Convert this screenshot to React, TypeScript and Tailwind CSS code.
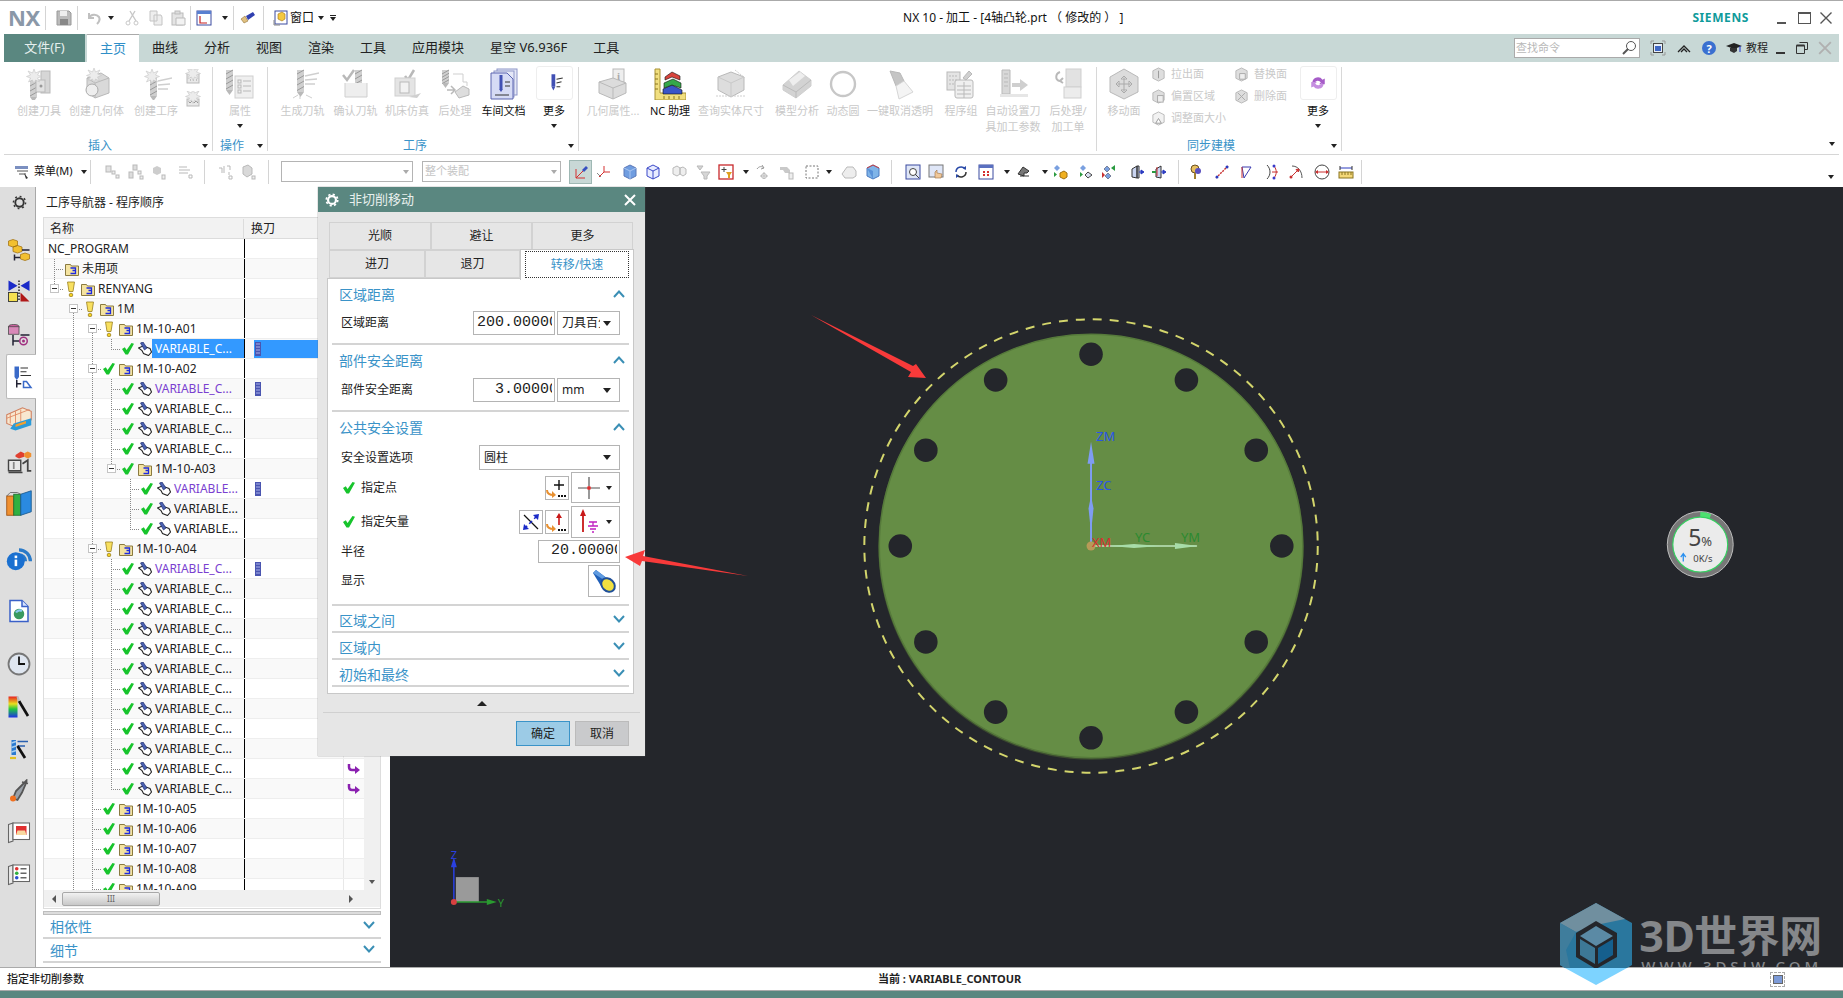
import type { ReactNode } from "react";

const GH = "#cfcfcf";
const GD = "#b9b9b9";

function Ico({ className = "h-4 w-4", box = 16, children }: { className?: string; box?: number; children: ReactNode }) {
  return (
    <svg viewBox={`0 0 ${box} ${box}`} className={`shrink-0 ${className}`}>
      {children}
    </svg>
  );
}

function Tri({ className = "" }: { className?: string }) {
  return <span className={`inline-block h-0 w-0 border-x-[3.5px] border-t-[4px] border-x-transparent border-t-[#222] ${className}`} />;
}

function Mill({ x, y, h = 20, c = GH }: { x: number; y: number; h?: number; c?: string }) {
  return (
    <g>
      <rect x={x} y={y} width="7" height={h} fill={c} />
      {[0, 1, 2, 3].map((i) => (
        <path key={i} d={`M${x} ${y + 4 + (i * h) / 4}l7-4`} stroke="#9a9a9a" strokeWidth="1" />
      ))}
      <path d={`M${x} ${y + h}l3.5 5 3.5-5z`} fill={GD} />
    </g>
  );
}

function Star({ x, y }: { x: number; y: number }) {
  return <path d={`M${x} ${y - 6}l1.5 4 4.5-2-2.5 4 4 1.5-4 1.5 2 4-4-2-1.5 3.5-1.5-3.5-4 2 2-4-4-1.5 4-1.5-2.5-4 4.5 2z`} fill="#ececec" stroke="#c6c6c6" strokeWidth=".6" />;
}

function Lines({ x, y }: { x: number; y: number }) {
  return <path d={`M${x} ${y}l14-3M${x} ${y + 4}l12-1M${x} ${y + 8}l10 0`} stroke={GH} strokeWidth="1.4" fill="none" />;
}

const Large = {
  createTool: (
    <>
      <Mill x={7} y={9} />
      <rect x="18" y="3" width="9" height="22" fill="#d6d6d6" stroke={GD} />
      <rect x="13" y="12" width="9" height="12" fill="#e2e2e2" stroke={GD} />
      <circle cx="18" cy="18" r="1.5" fill="#999" />
      <Star x={11} y={7} />
    </>
  ),
  createGeom: (
    <>
      <path d="M6 10l14-5 8 5v15l-14 5-8-6z" fill="#d9d9d9" stroke={GD} />
      <path d="M14 15l14-5M14 15v15M14 15l-8-5" stroke={GD} fill="none" />
      <circle cx="11" cy="22" r="6" fill="#eee" stroke="#aaa" />
      <Star x={13} y={6} />
    </>
  ),
  createOp: (
    <>
      <Mill x={10} y={8} />
      <Lines x={18} y={13} />
      <Star x={12} y={7} />
    </>
  ),
  attrs: (
    <>
      <Mill x={2} y={2} h={20} />
      <rect x="11" y="8" width="18" height="22" fill="#efefef" stroke={GH} />
      <path d="M19 13h8M19 18h8M19 23h8" stroke={GD} />
      <rect x="14" y="12" width="3" height="3" fill="none" stroke={GD} />
      <rect x="14" y="17" width="3" height="3" fill="none" stroke={GD} />
      <rect x="14" y="22" width="3" height="3" fill="none" stroke={GD} />
    </>
  ),
  gen: (
    <>
      <Mill x={10} y={2} h={22} />
      <Lines x={18} y={8} />
      <path d="M6 30l5-3M25 30l-6-3M13 31v-3" stroke={GH} />
    </>
  ),
  verify: (
    <>
      <path d="M3 7l4 5 7-10" stroke={GD} strokeWidth="2.5" fill="none" />
      <Mill x={15} y={2} h={20} />
      <path d="M5 15v14h22V15" fill="#eee" stroke={GH} />
    </>
  ),
  machine: (
    <>
      <path d="M14 8l3 4 6-10" stroke={GD} strokeWidth="2.5" fill="none" />
      <rect x="4" y="10" width="20" height="18" fill="#e4e4e4" stroke={GH} />
      <rect x="9" y="14" width="9" height="11" fill="#f2f2f2" stroke={GD} />
      <path d="M18 29l12-4-4 5z" fill={GH} />
    </>
  ),
  post: (
    <>
      <Mill x={3} y={2} h={13} />
      <path d="M8 22h8M12 18l4 4-4 4" stroke={GD} strokeWidth="1.5" fill="none" />
      <path d="M14 6h10v8h4v4" stroke={GH} fill="none" />
      <path d="M16 24l8-6 6 3v6l-10 3z" fill="#ddd" stroke={GD} />
    </>
  ),
  doc: (
    <>
      <rect x="9" y="1" width="20" height="26" fill="#e5e8f7" stroke="#8e96c8" />
      <rect x="6" y="3" width="20" height="26" fill="#e5e8f7" stroke="#8e96c8" />
      <path d="M3 5h16l6 6v20H3z" fill="#d6dbf5" stroke="#5a64b0" />
      <path d="M13 7v14" stroke="#4150b4" strokeWidth="3" />
      <path d="M11 21l2 3 2-3z" fill="#4150b4" />
      <path d="M7 27h14M17 14h5M17 18h5" stroke="#333" strokeWidth="1" />
    </>
  ),
  geoAttr: (
    <>
      <rect x="16" y="1" width="11" height="13" fill="#eee" stroke={GD} />
      <text x="21.5" y="12" fontSize="11" textAnchor="middle" fontWeight="700" fill="#aaa" fontFamily="Liberation Serif">i</text>
      <path d="M2 14l14-4 13 5v10l-13 6-14-6z" fill="#dcdcdc" stroke={GD} />
      <path d="M16 31V20M2 14l14 6 13-5" stroke={GD} fill="none" />
    </>
  ),
  nc: (
    <>
      <path d="M1 1h5v24h26v7H1z" fill="#f1df7f" stroke="#a89235" />
      <path d="M1 6h3M1 11h3M1 16h3M1 21h3M10 31v-3M15 31v-3M20 31v-3M25 31v-3" stroke="#8a7420" />
      <path d="M9 21l9-4 10 5v4H9z" fill="#3a55c8" stroke="#111" strokeWidth=".6" />
      <path d="M10 15l9-4 8 4v5l-9-3-8 3z" fill="#35a84a" stroke="#111" strokeWidth=".6" />
      <path d="M11 9l7-5 8 4v4l-8-3-7 3z" fill="#d8443c" stroke="#111" strokeWidth=".6" />
    </>
  ),
  measure: (
    <>
      <path d="M3 9l13-5 13 5v13l-13 7-13-7z" fill="#dddddd" stroke={GD} />
      <path d="M3 9l13 6 13-6M16 15v14" stroke="#c9c9c9" fill="none" />
      <path d="M1 28h30M20 2l10 8" stroke={GH} strokeDasharray="2 1" />
    </>
  ),
  wedge: (
    <>
      <path d="M2 17L18 3l12 9v6L15 30 2 22z" fill="#d3d3d3" stroke={GH} />
      <path d="M2 17l13 7v6M15 24l15-12" stroke="#bbb" fill="none" />
      <path d="M8 12l11-8 5 4-12 10z" fill="#eee" />
    </>
  ),
  ring: <circle cx="16" cy="16" r="12" fill="none" stroke="#c7c7c7" strokeWidth="2.4" />,
  lamp: (
    <>
      <path d="M6 3l10 2 4 8-8 5z" fill="#c5c5c5" stroke={GD} />
      <path d="M12 18l8-5 9 11-14 7z" fill="#f4f4f4" stroke="#d6d6d6" />
    </>
  ),
  group: (
    <>
      <rect x="2" y="4" width="13" height="18" fill="#e4e4e4" stroke={GD} />
      <path d="M4 8h9M4 12h9M4 16h9" stroke={GD} strokeDasharray="2 1" />
      <rect x="10" y="12" width="18" height="18" rx="2" fill="#efefef" stroke={GD} />
      <path d="M12 18h14M12 22h14M12 26h14M19 14v16" stroke={GD} />
      <path d="M18 10l6-7 3 3-6 6z" fill="#d0d0d0" stroke={GD} />
    </>
  ),
  auto: (
    <>
      <path d="M5 2h8v24h-8z" fill="#d8d8d8" stroke={GD} />
      <path d="M7 6h4M7 10h4M7 14h4M7 18h4" stroke={GD} />
      <path d="M3 26h28v3H3z" fill="#e6e6e6" />
      <path d="M15 15h8v-4l8 6-8 6v-4h-8z" fill="#cfcfcf" />
    </>
  ),
  postSheet: (
    <>
      <rect x="14" y="1" width="15" height="18" fill="#e2e2e2" stroke={GH} />
      <rect x="12" y="19" width="17" height="11" fill="#ececec" stroke={GH} />
      <path d="M8 4C3 6 3 12 8 13M8 13l3-3M8 13l3 2" stroke={GD} strokeWidth="2" fill="none" />
    </>
  ),
  moveFace: (
    <>
      <path d="M16 1l14 8v15l-14 7-14-7V9z" fill="#dcdcdc" stroke={GD} />
      <path d="M16 8v17M8 16h16M16 8l-3 3h6zM16 25l-3-3h6zM8 16l3-3v6zM24 16l-3-3v6z" stroke="#aaa" fill="#f4f4f4" />
    </>
  ),
};

function RibbonItem({ w, icon, label, active, drop }: { w: string; icon: ReactNode; label: ReactNode; active?: boolean; drop?: boolean }) {
  return (
    <div className={`flex shrink-0 flex-col items-center ${w}`}>
      <Ico className="mt-[1px] h-8 w-8" box={32}>
        {icon}
      </Ico>
      <div className={`mt-[3px] text-center text-[11px] leading-[16px] whitespace-nowrap ${active ? "text-[#111]" : "text-[#c9c9c9]"}`}>{label}</div>
      {drop && <Tri className="mt-[5px]" />}
    </div>
  );
}

function MoreItem({ w, children }: { w: string; children: ReactNode }) {
  return (
    <div className={`flex shrink-0 flex-col items-center ${w}`}>
      <div className="-mt-px flex h-[34px] w-[37px] items-center justify-center rounded-[3px] border border-[#eeeeee]">{children}</div>
      <div className="mt-[3px] text-[11px] leading-[16px] text-[#111]">更多</div>
      <Tri className="mt-[5px]" />
    </div>
  );
}

function RibbonGroup({ w, label, labelPad, children }: { w: string; label?: string; labelPad?: string; children: ReactNode }) {
  return (
    <div className={`relative mt-[5px] flex h-[84px] shrink-0 border-r border-[#d8d8d8] ${w}`}>
      {children}
      {label && (
        <div className="absolute right-[4px] bottom-[-5px] left-0 flex h-[20px] items-center">
          <span className={`text-center text-[12px] text-[#3a93c8] ${labelPad}`}>{label}</span>
          <Tri className="ml-auto" />
        </div>
      )}
    </div>
  );
}

function SmallFace({ label, kind }: { label: string; kind: number }) {
  return (
    <div className="flex h-[22px] items-center">
      <Ico className="h-[15px] w-[15px]">
        <path d="M8 1l6 3v8l-6 3-6-3V4z" fill={kind === 2 ? "#f2f2f2" : "#dedede"} stroke={GD} />
        {kind === 0 && <path d="M8 4v8" stroke="#999" />}
        {kind === 1 && <rect x="7" y="7" width="6" height="7" fill="#eee" stroke="#aaa" />}
        {kind === 2 && <path d="M5 13l3-5 3 5z" fill="#fff" stroke="#999" />}
        {kind === 3 && <path d="M6 7h6v6H6z" fill="#eee" stroke="#aaa" />}
        {kind === 4 && <path d="M4 12l8-8M4 4l8 8" stroke="#aaa" />}
      </Ico>
      <span className="ml-[5px] text-[11px] whitespace-nowrap text-[#c9c9c9]">{label}</span>
    </div>
  );
}

function Ribbon() {
  return (
    <div className="mx-[4px] flex h-[93px] shrink-0 border-b border-[#d6d6d6] bg-white">
      <RibbonGroup w="w-[209px]" label="插入" labelPad="w-[192px]">
        <div className="flex pl-[8px]">
          <RibbonItem w="w-[54px]" icon={Large.createTool} label="创建刀具" />
          <RibbonItem w="w-[61px]" icon={Large.createGeom} label="创建几何体" />
          <RibbonItem w="w-[58px]" icon={Large.createOp} label="创建工序" />
          <div className="flex w-[18px] flex-col gap-[6px] pt-[2px]">
            <Ico>
              <rect x="2" y="5" width="12" height="9" fill="#e8e8e8" stroke={GD} />
              <path d="M5 8h1M8 8h1M11 8h1M5 11h1M8 11h1M11 11h1" stroke="#999" />
              <Star x={8} y={3} />
            </Ico>
            <Ico>
              <rect x="2" y="8" width="12" height="7" fill="#e8e8e8" stroke={GD} />
              <path d="M3 10l2 2 2-2 2 2 2-2 2 2" stroke="#999" fill="none" />
              <Star x={8} y={4} />
            </Ico>
          </div>
        </div>
      </RibbonGroup>
      <RibbonGroup w="w-[55px]" label="操作" labelPad="w-[38px]">
        <RibbonItem w="w-[54px]" icon={Large.attrs} label="属性" drop />
      </RibbonGroup>
      <RibbonGroup w="w-[311px]" label="工序" labelPad="w-[294px]">
        <div className="flex pl-[8px]">
          <RibbonItem w="w-[53px]" icon={Large.gen} label="生成刀轨" />
          <RibbonItem w="w-[53px]" icon={Large.verify} label="确认刀轨" />
          <RibbonItem w="w-[50px]" icon={Large.machine} label="机床仿真" />
          <RibbonItem w="w-[46px]" icon={Large.post} label="后处理" />
          <RibbonItem w="w-[51px]" icon={Large.doc} label="车间文档" active />
          <MoreItem w="w-[50px]">
            <Ico className="h-5 w-5">
              <path d="M6 1h3v10H6z" fill="#4150b4" />
              <path d="M6 11l1.5 3 1.5-3z" fill="#4150b4" />
              <path d="M10 5l5-1M10 8l4-1M10 11h3" stroke="#333" strokeWidth=".9" />
            </Ico>
          </MoreItem>
        </div>
      </RibbonGroup>
      <RibbonGroup w="w-[518px]">
        <div className="flex pl-[6px]">
          <RibbonItem w="w-[56px]" icon={Large.geoAttr} label="几何属性..." />
          <RibbonItem w="w-[58px]" icon={Large.nc} label="NC 助理" active />
          <RibbonItem w="w-[64px]" icon={Large.measure} label="查询实体尺寸" />
          <RibbonItem w="w-[68px]" icon={Large.wedge} label="模型分析" />
          <RibbonItem w="w-[24px]" icon={Large.ring} label="动态圆" />
          <RibbonItem w="w-[90px]" icon={Large.lamp} label="一键取消透明" />
          <RibbonItem w="w-[32px]" icon={Large.group} label="程序组" />
          <RibbonItem w="w-[72px]" icon={Large.auto} label={<>自动设置刀<br />具加工参数</>} />
          <RibbonItem w="w-[38px]" icon={Large.postSheet} label={<>后处理/<br />加工单</>} />
        </div>
      </RibbonGroup>
      <RibbonGroup w="w-[245px]" label="同步建模" labelPad="w-[228px]">
        <RibbonItem w="w-[54px]" icon={Large.moveFace} label="移动面" />
        <div className="-mt-[4px] flex w-[83px] flex-col">
          <SmallFace label="拉出面" kind={0} />
          <SmallFace label="偏置区域" kind={1} />
          <SmallFace label="调整面大小" kind={2} />
        </div>
        <div className="-mt-[4px] flex w-[65px] flex-col">
          <SmallFace label="替换面" kind={3} />
          <SmallFace label="删除面" kind={4} />
        </div>
        <MoreItem w="w-[38px]">
          <Ico className="h-[18px] w-[18px]">
            <path d="M3 7a5 5 0 0 1 9-2l2-1v5h-5l1.5-1.5A3 3 0 0 0 5 8z" fill="#a65cc8" />
            <path d="M13 9a5 5 0 0 1-9 2l-2 1V7h5L5.5 8.5A3 3 0 0 0 11 8z" fill="#c58ee0" />
          </Ico>
        </MoreItem>
      </RibbonGroup>
      <div className="flex flex-1 items-end justify-end pr-[4px] pb-[8px]">
        <Tri />
      </div>
    </div>
  );
}

function Sl({ w, children }: { w: string; children?: ReactNode }) {
  return <div className={`flex shrink-0 items-center ${w}`}>{children}</div>;
}

function VSep({ className = "" }: { className?: string }) {
  return <div className={`h-[24px] w-px shrink-0 bg-[#d4d4d4] ${className}`} />;
}

const Ghost = ({ v = 0 }: { v?: number }) => (
  <Ico>
    {v === 0 && (
      <>
        <rect x="1" y="2" width="5" height="6" fill="#e2e2e2" stroke={GD} />
        <rect x="7" y="7" width="3" height="3" fill="#eee" stroke={GD} />
        <rect x="11" y="11" width="3" height="3" fill="#eee" stroke={GD} />
      </>
    )}
    {v === 1 && (
      <>
        <rect x="5" y="1" width="4" height="5" fill="#ddd" stroke={GD} />
        <rect x="1" y="8" width="4" height="6" fill="#ddd" stroke={GD} />
        <rect x="10" y="7" width="3" height="3" fill="#eee" stroke={GD} />
        <rect x="12" y="12" width="3" height="3" fill="#eee" stroke={GD} />
      </>
    )}
    {v === 2 && (
      <>
        <path d="M2 4l4-2 4 2v5l-4 2-4-2z" fill="#cdcdcd" />
        <rect x="11" y="11" width="3" height="4" fill="#eee" stroke={GD} />
      </>
    )}
    {v === 3 && <path d="M2 3h8M2 6h11M2 9h9M12 11h3v3h-3z" stroke={GD} fill="none" />}
    {v === 4 && <path d="M1 4h3v5M6 2v7M9 2h3v4M11 8v3M11 12h3v3h-3z" stroke={GD} fill="none" />}
    {v === 5 && (
      <>
        <path d="M3 3l5-2 4 3v6l-5 3-4-3z" fill="#d9d9d9" stroke={GD} />
        <rect x="12" y="12" width="3" height="3" fill="#eee" stroke={GD} />
      </>
    )}
    {v === 6 && <path d="M2 4l4-2 3 2v6l-3 2-4-2zM9 4l3-1 3 2v5l-3 2-3-2z" fill="#eee" stroke={GD} />}
    {v === 7 && <path d="M1 2h6l-3 4zM5 8h9l-3 4v3h-3v-3z" fill="#d6d6d6" stroke={GD} />}
    {v === 8 && (
      <>
        <path d="M3 5C5 2 8 2 10 4M8 1l2 3-3 1" stroke="#999" fill="none" />
        <path d="M10 8v7M6 12h8" stroke={GD} />
        <circle cx="10" cy="12" r="2.5" fill="none" stroke={GD} />
      </>
    )}
    {v === 9 && (
      <>
        <path d="M1 3h7l3 3v3H6L4 6H1z" fill="#c9c9c9" />
        <rect x="10" y="9" width="4" height="6" fill="#eee" stroke={GD} />
      </>
    )}
    {v === 10 && <rect x="2" y="2" width="12" height="12" fill="none" stroke="#777" strokeDasharray="2 1.5" />}
    {v === 11 && <path d="M1 10l5-7h6l3 4v5l-3 2H4z" fill="#ededed" stroke={GD} />}
  </Ico>
);

function BlueCube({ wire }: { wire?: boolean }) {
  return (
    <Ico>
      <path d="M8 1l6 3v8l-6 3-6-3V4z" fill={wire ? "#e8ecff" : "#6f9de0"} stroke={wire ? "#3b48c8" : "#5b78b8"} />
      <path d="M2 4l6 3 6-3M8 7v8" stroke={wire ? "#3b48c8" : "#a8c4f0"} fill="none" />
    </Ico>
  );
}

function Toolbar() {
  return (
    <div className="mx-[4px] flex h-[32px] shrink-0 items-center pt-px pl-[10px] text-[11px] text-[#111]">
      <Sl w="w-[20px]">
        <Ico>
          <rect x="1" y="2" width="13" height="3" fill="#7b8fc0" />
          <path d="M3 7h11M5 10h7" stroke="#555" />
          <path d="M10 9l4 5-2 1z" fill="#333" />
        </Ico>
      </Sl>
      <Sl w="w-[47px]">菜单(M)</Sl>
      <Sl w="w-[9px]">
        <Tri />
      </Sl>
      <VSep />
      <div className="flex pl-[14px]">
        <Sl w="w-[23px]"><Ghost v={0} /></Sl>
        <Sl w="w-[23px]"><Ghost v={1} /></Sl>
        <Sl w="w-[26px]"><Ghost v={2} /></Sl>
        <Sl w="w-[27px]"><Ghost v={3} /></Sl>
      </div>
      <VSep />
      <div className="flex pl-[13px]">
        <Sl w="w-[22px]"><Ghost v={4} /></Sl>
        <Sl w="w-[28px]"><Ghost v={5} /></Sl>
      </div>
      <VSep />
      <div className="ml-[12px] flex h-[21px] w-[132px] items-center justify-end border border-[#b4b4b4] pr-[3px]">
        <Tri className="border-t-[#aaa]" />
      </div>
      <div className="ml-[9px] flex h-[21px] w-[139px] items-center border border-[#b4b4b4] pr-[3px] pl-[2px] text-[#c4c4c4]">
        整个装配
        <Tri className="ml-auto border-t-[#aaa]" />
      </div>
      <div className="ml-[8px] flex h-[24px] w-[23px] items-center justify-center border border-[#9fb8b4] bg-[#c8d8d6]">
        <Ico>
          <path d="M3 5v9h9M3 14l7-7" stroke="#d43030" fill="none" />
          <path d="M9 6l4-4 2 2-4 4z" fill="#3650c0" />
        </Ico>
      </div>
      <Sl w="w-[30px]">
        <span className="pl-[4px]">
          <Ico>
            <path d="M8 2v6l-5 5M8 8h6" stroke="#d43030" fill="none" />
            <path d="M1 9l4 4" stroke="#888" />
          </Ico>
        </span>
      </Sl>
      <Sl w="w-[23px]"><BlueCube /></Sl>
      <Sl w="w-[26px]"><BlueCube wire /></Sl>
      <Sl w="w-[25px]"><Ghost v={6} /></Sl>
      <Sl w="w-[22px]"><Ghost v={7} /></Sl>
      <Sl w="w-[25px]">
        <Ico>
          <rect x="1" y="1" width="14" height="14" fill="#fff" stroke="#c8282c" strokeWidth="1.3" />
          <path d="M6 3v5M3.5 5.5h5" stroke="#444" />
          <path d="M8 8h6l-2 3v3h-2v-3z" fill="#e0a020" />
        </Ico>
      </Sl>
      <Sl w="w-[11px]"><Tri /></Sl>
      <Sl w="w-[25px]"><Ghost v={8} /></Sl>
      <Sl w="w-[25px]"><Ghost v={9} /></Sl>
      <Sl w="w-[22px]"><Ghost v={10} /></Sl>
      <Sl w="w-[15px]"><Tri /></Sl>
      <Sl w="w-[24px]"><Ghost v={11} /></Sl>
      <Sl w="w-[26px]">
        <Ico>
          <path d="M8 1l6 3v8l-6 3-6-3V4z" fill="#7fb4e8" stroke="#4a7ac0" />
          <path d="M2 4l6 3v8" fill="#5a92d8" />
          <path d="M2 4l6-3 6 3" stroke="#d04040" fill="none" />
        </Ico>
      </Sl>
      <VSep />
      <div className="flex pl-[13px]">
        <Sl w="w-[23px]">
          <Ico>
            <rect x="1" y="1" width="14" height="14" fill="#dfe6f7" stroke="#3a4aa0" />
            <circle cx="8" cy="8" r="3.5" fill="#fff" stroke="#444" />
            <path d="M10 10l4 4" stroke="#444" />
          </Ico>
        </Sl>
        <Sl w="w-[25px]">
          <Ico>
            <rect x="1" y="1" width="14" height="12" fill="#dfe6f7" stroke="#777" />
            <path d="M7 8v6h6l1-4-5-1V6z" fill="#f0c89a" stroke="#a07040" strokeWidth=".6" />
          </Ico>
        </Sl>
        <Sl w="w-[25px]">
          <Ico>
            <path d="M3 8a5 5 0 0 1 9-3" stroke="#2a4aa8" strokeWidth="1.5" fill="none" />
            <path d="M13 8a5 5 0 0 1-9 3" stroke="#333" strokeWidth="1.5" fill="none" />
            <path d="M10 4l3-2v4zM6 12l-3 2v-4z" fill="#2a4aa8" />
          </Ico>
        </Sl>
        <Sl w="w-[26px]">
          <Ico>
            <rect x="1" y="1" width="14" height="14" fill="#fff" stroke="#3a4aa0" />
            <rect x="1" y="1" width="14" height="3" fill="#5a70c0" />
            <path d="M5 7h2v2H5zM9 7h2v2H9zM5 10h2v2H5zM9 10h2v2H9z" fill="#d43030" />
          </Ico>
        </Sl>
        <Sl w="w-[12px]"><Tri /></Sl>
        <Sl w="w-[26px]">
          <Ico>
            <path d="M2 10l5-7 6 4-2 2H8v3z" fill="#777" stroke="#333" />
            <path d="M4 12h9" stroke="#333" />
          </Ico>
        </Sl>
        <Sl w="w-[10px]"><Tri /></Sl>
        <Sl w="w-[26px]">
          <Ico>
            <path d="M5 1l3 3-3 3-3-3z" fill="#7aa0e0" />
            <path d="M2 8v5l3-2.5z" fill="#2a9a40" />
            <path d="M8 9l4-2 3 2v4l-3 2-4-2z" fill="#f0b020" stroke="#a07010" />
          </Ico>
        </Sl>
        <Sl w="w-[23px]">
          <Ico>
            <path d="M5 1l3 3-3 3-3-3z" fill="#7aa0e0" />
            <path d="M2 8v5l3-2.5z" fill="#2a9a40" />
            <path d="M10 8l4 3-4 3-3-3z" fill="#d8def0" stroke="#444" />
          </Ico>
        </Sl>
        <Sl w="w-[29px]">
          <Ico>
            <path d="M6 2l3 3-3 3-3-3zM7 9l3 3-3 3-3-3z" fill="#7aa0e0" stroke="#334" strokeWidth=".5" />
            <path d="M14 1v6l-4-3z" fill="#2a9a40" />
            <path d="M1 8v6l3-3z" fill="#c83030" />
          </Ico>
        </Sl>
        <Sl w="w-[21px]">
          <Ico>
            <path d="M2 5l5-3v12l-5-1zM7 2h2v12H7z" fill="#c9d4f0" stroke="#333" />
            <path d="M9 8h4M11 6l3 2-3 2z" fill="#2a3ac0" stroke="#2a3ac0" />
          </Ico>
        </Sl>
        <Sl w="w-[27px]">
          <Ico>
            <path d="M5 5l5-3v12l-5-1z" fill="#c9d4f0" stroke="#333" />
            <path d="M1 8h4" stroke="#2a9a40" strokeWidth="2" />
            <path d="M6 3v9" stroke="#c83030" />
            <path d="M10 8h3M12 6l3 2-3 2z" fill="#2a3ac0" stroke="#2a3ac0" />
          </Ico>
        </Sl>
      </div>
      <VSep />
      <div className="flex pl-[10px]">
        <Sl w="w-[25px]">
          <Ico>
            <circle cx="6" cy="5" r="4" fill="#e8c060" stroke="#6a5020" />
            <circle cx="9" cy="7" r="3" fill="#5a50c0" />
            <path d="M6 9v6" stroke="#a08030" strokeWidth="2" />
          </Ico>
        </Sl>
        <Sl w="w-[25px]">
          <Ico>
            <path d="M2 14L14 2" stroke="#c83030" strokeWidth="1.4" strokeDasharray="2 1" />
            <circle cx="3" cy="13" r="1.5" fill="#2a3ac0" />
            <circle cx="13" cy="3" r="1.5" fill="#2a3ac0" />
          </Ico>
        </Sl>
        <Sl w="w-[25px]">
          <Ico>
            <path d="M3 3h9L5 14z" fill="none" stroke="#3a3ab0" />
            <path d="M3 3v11" stroke="#c83030" />
          </Ico>
        </Sl>
        <Sl w="w-[24px]">
          <Ico>
            <path d="M3 1c4 4 4 10 0 14" stroke="#444" fill="none" />
            <path d="M10 2c3 4 3 8 0 12M8 8h6" stroke="#c83030" fill="none" />
            <circle cx="10" cy="2" r="1.5" fill="#3a3ac8" />
            <circle cx="10" cy="14" r="1.5" fill="#3a3ac8" />
          </Ico>
        </Sl>
        <Sl w="w-[26px]">
          <Ico>
            <path d="M4 2c6 0 10 5 10 12" stroke="#555" fill="none" />
            <path d="M3 13l8-8M11 5l-3 .5 2.5 2.5z" stroke="#c83030" fill="#c83030" />
            <circle cx="3" cy="13" r="1.5" fill="#c83030" />
          </Ico>
        </Sl>
        <Sl w="w-[24px]">
          <Ico>
            <circle cx="8" cy="8" r="7" fill="none" stroke="#444" />
            <path d="M2 8h12" stroke="#c83030" />
            <path d="M1 8l3-2v4zM15 8l-3-2v4z" fill="#c83030" />
          </Ico>
        </Sl>
        <Sl w="w-[23px]">
          <Ico>
            <path d="M2 4h12" stroke="#2a3ac0" />
            <path d="M2 2v4M14 2v4" stroke="#333" />
            <rect x="1" y="8" width="14" height="6" fill="#f4d878" stroke="#8a7420" />
            <path d="M4 8v3M7 8v3M10 8v3M13 8v3" stroke="#8a7420" />
          </Ico>
        </Sl>
      </div>
      <VSep />
      <Tri className="mt-[10px] mr-[5px] ml-auto" />
    </div>
  );
}

function Check() {
  return (
    <svg viewBox="0 0 12 12" className="h-3 w-3 shrink-0">
      <path d="M0 6l2.8-1.800L4.600 7 9.500 0 12 .8 6 11.500H3.500z" fill="#17c42c" />
    </svg>
  );
}

function Bulb() {
  return (
    <svg viewBox="0 0 12 16" className="h-4 w-3 shrink-0">
      <path d="M2.5 1h7L8 10.500H4z" fill="#f8e060" stroke="#9a8020" strokeWidth=".8" />
      <circle cx="6" cy="14" r="1.800" fill="#f4d020" stroke="#9a8020" strokeWidth=".8" />
    </svg>
  );
}

function Folder() {
  return (
    <svg viewBox="0 0 14 14" className="h-[14px] w-[14px] shrink-0">
      <path d="M.5 2.500h5l1 1.500h7v9.500H.5z" fill="#f4e3a0" stroke="#8a7a40" />
      <path d="M5.500 6h5v2.500h-3M10.500 8.500v3h-5" stroke="#1d2ae0" strokeWidth="1.300" fill="none" />
    </svg>
  );
}

function OpIcon() {
  return (
    <svg viewBox="0 0 14 14" className="h-[14px] w-[14px] shrink-0">
      <path d="M.5 6L5 4l7 2.500 1.500 3.500-3 3.500-5-2-1.500-3z" fill="#fff" stroke="#222" strokeWidth="1.100" />
      <path d="M2.500 1L5 0l4 6-2.500 2z" fill="#4a60b0" stroke="#223070" strokeWidth=".7" />
    </svg>
  );
}

function ToolChange() {
  return (
    <svg viewBox="0 0 8 14" className="h-[14px] w-[8px]">
      <rect x="1" y="0" width="6" height="14" fill="#4a55b0" />
      <path d="M2 2h4M2 5h4M2 8h4M2 11h4" stroke="#a8b0e8" />
    </svg>
  );
}

function PurpleArrow() {
  return (
    <svg viewBox="0 0 14 12" className="h-3 w-[14px]">
      <path d="M2 1v3c0 2 1 3 3 3h4" stroke="#8a20b0" strokeWidth="2.5" fill="none" />
      <path d="M8 3l5 4-5 4z" fill="#8a20b0" />
    </svg>
  );
}

type TreeRow = {
  c?: number;
  label: string;
  status?: "bulb" | "check";
  kind?: "folder" | "op";
  expand?: boolean;
  purple?: boolean;
  tool?: boolean;
  arrow?: boolean;
  sel?: boolean;
};

const op = (c: number, label: string, extra: Partial<TreeRow> = {}): TreeRow => ({ c, label, kind: "op", status: "check", ...extra });
const dir = (c: number, label: string, status: "bulb" | "check", expand = true): TreeRow => ({ c, label, kind: "folder", status, expand });

const rows: TreeRow[] = [
  { label: "NC_PROGRAM" },
  { c: 53, label: "未用项", kind: "folder" },
  dir(53, "RENYANG", "bulb"),
  dir(72, "1M", "bulb"),
  dir(91, "1M-10-A01", "bulb"),
  op(110, "VARIABLE_C...", { sel: true, tool: true }),
  dir(91, "1M-10-A02", "check"),
  op(110, "VARIABLE_C...", { purple: true, tool: true }),
  op(110, "VARIABLE_C..."),
  op(110, "VARIABLE_C..."),
  op(110, "VARIABLE_C..."),
  dir(110, "1M-10-A03", "check"),
  op(129, "VARIABLE...", { purple: true, tool: true }),
  op(129, "VARIABLE..."),
  op(129, "VARIABLE..."),
  dir(91, "1M-10-A04", "bulb"),
  op(110, "VARIABLE_C...", { purple: true, tool: true }),
  ...Array.from({ length: 9 }, () => op(110, "VARIABLE_C...")),
  op(110, "VARIABLE_C...", { arrow: true }),
  op(110, "VARIABLE_C...", { arrow: true }),
  dir(91, "1M-10-A05", "check", false),
  dir(91, "1M-10-A06", "check", false),
  dir(91, "1M-10-A07", "check", false),
  dir(91, "1M-10-A08", "check", false),
  dir(91, "1M-10-A09", "check", false),
];

const spans = [
  { x: 53, from: 1, to: 2 },
  { x: 72, from: 3.5, to: 33 },
  { x: 91, from: 4.5, to: 33 },
  { x: 110, from: 5, to: 5 },
  { x: 110, from: 7, to: 11 },
  { x: 129, from: 12, to: 14 },
  { x: 110, from: 16, to: 27 },
];

function TreeRowView({ row, i }: { row: TreeRow; i: number }) {
  const c = row.c ?? 0;
  const guides = spans.filter((s) => Math.floor(s.from) <= i && i <= s.to);
  return (
    <div className={`flex h-5 shrink-0 border-b border-[#eeeeee] text-[12px] ${i % 2 ? "bg-[#f9f9f9]" : "bg-white"}`}>
      <div className="relative flex h-full w-[201px] shrink-0 items-center border-r border-black" style={{ paddingLeft: row.c ? c + 11 - 43 : 4 }}>
        {guides.map((g) => (
          <span
            key={`${g.x}-${g.from}`}
            className="absolute w-0 border-l border-dotted border-[#888]"
            style={{ left: g.x - 43, top: i < g.from ? 10 : 0, bottom: i === g.to ? 10 : 0 }}
          />
        ))}
        {row.c && <span className="absolute top-[10px] w-[9px] border-t border-dotted border-[#888]" style={{ left: c - 43 }} />}
        {row.expand && (
          <span className="absolute top-[5px] flex h-[9px] w-[9px] items-center justify-center border border-[#c4c4c4] bg-white" style={{ left: c - 47 }}>
            <span className="h-px w-[5px] bg-[#333]" />
          </span>
        )}
        {row.status && (
          <span className="relative mr-[4px] flex w-3 shrink-0 justify-center">{row.status === "bulb" ? <Bulb /> : <Check />}</span>
        )}
        {row.kind === "folder" && <span className="relative"><Folder /></span>}
        {row.kind === "op" && <span className="relative"><OpIcon /></span>}
        <span
          className={`relative flex h-full items-center whitespace-nowrap ${row.c ? "pl-[3px]" : ""} ${
            row.sel ? "h-[18px] flex-1 bg-[#3399ff] text-white" : row.purple ? "text-[#7a3fd0]" : "text-[#222]"
          }`}
        >
          {row.label}
        </span>
      </div>
      <div className="flex w-[99px] shrink-0 items-center border-r border-[#e8e8e8] pl-[9px]">
        {row.sel && <span className="absolute h-[18px] w-[74px] bg-[#3399ff]" />}
        {row.tool && <span className="relative flex"><ToolChange /></span>}
      </div>
      <div className="flex w-[20px] shrink-0 items-center justify-center">{row.arrow && <PurpleArrow />}</div>
    </div>
  );
}

function NavPanel() {
  return (
    <div className="flex w-[354px] shrink-0 flex-col bg-white pl-[7px]">
      <div className="flex h-[30px] shrink-0 items-center pt-px pl-[3px] text-[12px] text-[#222]">工序导航器 - 程序顺序</div>
      <div className="flex h-[692px] w-[338px] shrink-0 flex-col border border-[#dddddd]">
        <div className="flex h-[21px] shrink-0 items-center border-b border-[#dcdcdc] bg-[#f2f2f2] pt-px text-[12px] text-[#222]">
          <div className="flex h-full w-[200px] items-center border-r border-[#dcdcdc] pl-[6px]">名称</div>
          <div className="pl-[7px]">换刀</div>
        </div>
        <div className="flex h-[651px] overflow-hidden">
          <div className="flex w-[320px] shrink-0 flex-col">
            {rows.map((r, i) => (
              <TreeRowView key={i} row={r} i={i} />
            ))}
          </div>
          <div className="flex flex-1 flex-col items-center justify-end bg-[#f0f0f0] pb-[6px]">
            <Tri className="border-t-[#555]" />
          </div>
        </div>
        <div className="flex h-[17px] shrink-0 items-center bg-[#f0f0f0] pr-[27px] pl-[8px]">
          <span className="h-0 w-0 border-y-[4px] border-r-[4px] border-y-transparent border-r-[#555]" />
          <div className="ml-[6px] flex h-[14px] w-[98px] items-center justify-center rounded-[2px] border border-[#a8a8a8] bg-linear-to-b from-[#f2f2f2] to-[#c8c8c8] text-[8px] text-[#666]">
            III
          </div>
          <span className="ml-auto h-0 w-0 border-y-[4px] border-l-[4px] border-y-transparent border-l-[#555]" />
        </div>
      </div>
      <div className="mt-[2px] h-[4px] w-[338px] shrink-0 border border-[#bdbdbd] bg-[#dcdcdc]" />
      <div className="w-[338px]">
        <SideSection label="相依性" />
        <SideSection label="细节" />
      </div>
    </div>
  );
}

function ChevronDown({ up }: { up?: boolean }) {
  return (
    <svg viewBox="0 0 12 8" className="h-2 w-3 shrink-0">
      <path d={up ? "M1 7l5-5.500L11 7" : "M1 1l5 5.500L11 1"} stroke="#3a8fb5" strokeWidth="2" fill="none" />
    </svg>
  );
}

function SideSection({ label }: { label: string }) {
  return (
    <div className="flex h-[24px] items-center border-b-2 border-[#d4d4d4] pr-[6px] pl-[7px]">
      <span className="text-[14px] text-[#3a93c8]">{label}</span>
      <span className="ml-auto pb-[3px]">
        <ChevronDown />
      </span>
    </div>
  );
}

function RailIcon({ h, active, children }: { h: string; active?: boolean; children: ReactNode }) {
  return (
    <div className={`flex shrink-0 items-center justify-center ${h} ${active ? "-mr-px ml-[3px] rounded-l-[2px] border-y border-l border-[#bbb] bg-white" : ""}`}>
      {children}
    </div>
  );
}

function Rail() {
  const c = "h-6 w-6";
  return (
    <div className="flex w-[36px] shrink-0 flex-col border-r border-[#a8a8a8] bg-[#dedede] pl-[3px]">
      <RailIcon h="h-[46px] pb-[16px]">
        <Ico className="h-[15px] w-[15px]">
          <circle cx="8" cy="8" r="4.500" fill="none" stroke="#333" strokeWidth="2" />
          <circle cx="8" cy="8" r="6.500" fill="none" stroke="#333" strokeWidth="1.500" strokeDasharray="2 3" />
        </Ico>
      </RailIcon>
      <RailIcon h="h-[33px]">
        <Ico className={c}>
          <path d="M1 2l3-1 3 1v3l-3 1-3-1zM4 6l3-1 3 1v3l-3 1-3-1z" fill="#f2c030" stroke="#a07010" strokeWidth=".5" />
          <path d="M5 11v4M5 13h4M10 8h5" stroke="#223" />
          <path d="M9 11l3-1 3 1v3l-3 1-3-1z" fill="#f2c030" stroke="#a07010" strokeWidth=".5" />
        </Ico>
      </RailIcon>
      <RailIcon h="h-[49px]">
        <Ico className={c}>
          <path d="M1 1l6 3.500-6 3.500zM15 1L9 4.500 15 8z" fill="#1a2ac8" />
          <rect x="1" y="9" width="6" height="6" fill="#f4e050" stroke="#333" strokeWidth=".6" />
          <path d="M9 15V9l6 6z" fill="#b01818" />
          <path d="M8 1v14" stroke="#222" strokeDasharray="1 1" />
        </Ico>
      </RailIcon>
      <RailIcon h="h-[39px]">
        <Ico className={c}>
          <ellipse cx="4.500" cy="2.500" rx="3.500" ry="1.500" fill="#d060a0" stroke="#444" strokeWidth=".5" />
          <rect x="1" y="2.500" width="7" height="5" fill="#d888b8" stroke="#444" strokeWidth=".5" />
          <path d="M4 8v7M4 12h4M9 8h6" stroke="#223" />
          <circle cx="11" cy="12" r="2.500" fill="none" stroke="#a03080" />
          <circle cx="11" cy="12" r="1" fill="#a03080" />
        </Ico>
      </RailIcon>
      <RailIcon h="h-[45px]" active>
        <Ico className={c}>
          <path d="M3 1h3v7H3z" fill="#3a6ac8" />
          <path d="M3 8l1.500 2L6 8z" fill="#3a6ac8" />
          <path d="M7 2h5M7 4.500h4M7 7h7" stroke="#333" strokeWidth=".8" />
          <path d="M4.500 10v5M4.500 12.500h3" stroke="#223" />
          <path d="M9 11h2l3 4H9z" fill="#fff" stroke="#3a6ac8" />
        </Ico>
      </RailIcon>
      <RailIcon h="h-[42px]">
        <Ico className="h-7 w-7">
          <path d="M1 5l9-4 5 2v5l-9 4-5-2z" fill="#f8e8d0" stroke="#d08060" strokeWidth=".6" />
          <path d="M3 4v6M6 3v7M9 2v7M1 7l13-5" stroke="#e08860" strokeWidth=".5" />
          <path d="M5 10l10-3v4l-9 3-3-1z" fill="#2a9ad8" />
          <path d="M6 10.500l6-2v1.500l-6 2z" fill="#f0a030" />
        </Ico>
      </RailIcon>
      <RailIcon h="h-[42px]">
        <Ico className="h-7 w-7">
          <path d="M2 7h7v6H2zM2 14h8" fill="#e8e8e8" stroke="#444" strokeWidth=".8" />
          <path d="M5 8v4" stroke="#888" />
          <path d="M10 9l3-2v6h2" stroke="#444" fill="none" />
          <path d="M6 4l3-2 2 1v2l-3 1-2-1z" fill="#e04030" />
          <path d="M11 3l2-1 2 1v2l-2 1-2-1z" fill="#f09030" />
        </Ico>
      </RailIcon>
      <RailIcon h="h-[40px]">
        <Ico className="h-7 w-7">
          <rect x="1" y="4" width="4" height="11" fill="#f09030" stroke="#a05010" strokeWidth=".5" />
          <rect x="5" y="3" width="4" height="12" fill="#30b040" stroke="#207030" strokeWidth=".5" />
          <path d="M9 3l6-2v12l-6 2z" fill="#2a8ae0" stroke="#1a5a90" strokeWidth=".5" />
          <path d="M1 4l2-2h4l2 1" stroke="#666" fill="none" strokeWidth=".5" />
        </Ico>
      </RailIcon>
      <RailIcon h="h-[60px] pt-[10px]">
        <Ico className="h-[26px] w-[26px]">
          <path d="M8 3a7 7 0 0 1 7 7M8 6a4 4 0 0 1 4 4" stroke="#2a7ac8" strokeWidth="2" fill="none" />
          <circle cx="6" cy="10" r="5.500" fill="#1a70d0" />
          <rect x="5.300" y="9" width="1.600" height="4" fill="#fff" />
          <rect x="5.300" y="6.500" width="1.600" height="1.600" fill="#fff" />
        </Ico>
      </RailIcon>
      <RailIcon h="h-[56px]">
        <Ico className="h-[24px] w-[24px]">
          <path d="M2 1h8l4 4v10H2z" fill="#fff" stroke="#3a60c8" />
          <path d="M10 1v4h4" fill="#d8e4ff" stroke="#3a60c8" />
          <circle cx="8" cy="10" r="3.500" fill="#3a9a60" />
          <path d="M6 9a3 3 0 0 1 4-1" stroke="#8ac8f0" strokeWidth="1.500" fill="none" />
        </Ico>
      </RailIcon>
      <RailIcon h="h-[50px]">
        <Ico className="h-[24px] w-[24px]">
          <circle cx="8" cy="8" r="7" fill="#dfe6f0" stroke="#777" strokeWidth="1.200" />
          <path d="M8 3v5h4" stroke="#111" strokeWidth="1.200" fill="none" />
        </Ico>
      </RailIcon>
      <RailIcon h="h-[36px]">
        <Ico className="h-[24px] w-[24px]">
          <defs>
            <linearGradient id="rb" x1="0" x2="0" y1="0" y2="1">
              <stop offset="0" stopColor="#e82020" />
              <stop offset=".35" stopColor="#e8e020" />
              <stop offset=".6" stopColor="#20c840" />
              <stop offset="1" stopColor="#2030e8" />
            </linearGradient>
          </defs>
          <rect x="1" y="1" width="6" height="14" fill="url(#rb)" />
          <path d="M8 4l6 10" stroke="#111" strokeWidth="1.800" />
          <path d="M8 4l-1-3" stroke="#bbb" strokeWidth="1.500" />
        </Ico>
      </RailIcon>
      <RailIcon h="h-[48px]">
        <Ico className="h-[24px] w-[24px]">
          <path d="M3 2h3v10H3z" fill="#2a7ad0" />
          <path d="M3 4l3-1M3 7l3-1M3 10l3-1" stroke="#a8d0f0" />
          <path d="M7 3h7M7 6h5" stroke="#2a60b0" />
          <path d="M7 6l5 8" stroke="#111" strokeWidth="1.800" />
          <path d="M2 14h4" stroke="#e0c020" strokeWidth="1.500" />
        </Ico>
      </RailIcon>
      <RailIcon h="h-[36px]">
        <Ico className="h-[24px] w-[24px]">
          <path d="M13 1L6 8l-2 5 3 1 3-5 3-7zM10 2l4 1" stroke="#555" strokeWidth="1.200" fill="#9aa0a8" />
          <circle cx="4" cy="13" r="2" fill="#f07020" />
        </Ico>
      </RailIcon>
      <RailIcon h="h-[46px]">
        <Ico className="h-[24px] w-[24px]">
          <path d="M1 3l3-1v12l-3 1z" fill="#e8e8e8" stroke="#666" strokeWidth=".7" />
          <rect x="4" y="2" width="11" height="11" fill="#fff" stroke="#666" strokeWidth=".7" />
          <rect x="6" y="4" width="7" height="6" fill="#e03030" />
          <path d="M6 10h7l-1-3H7z" fill="#f8d8a0" />
        </Ico>
      </RailIcon>
      <RailIcon h="h-[38px]">
        <Ico className="h-[24px] w-[24px]">
          <path d="M1 3l3-1v12l-3 1z" fill="#e8e8e8" stroke="#666" strokeWidth=".7" />
          <rect x="4" y="2" width="11" height="11" fill="#fff" stroke="#666" strokeWidth=".7" />
          <circle cx="6.500" cy="4.500" r="1.200" fill="#e03030" />
          <circle cx="6.500" cy="7.500" r="1.200" fill="#30b040" />
          <circle cx="6.500" cy="10.500" r="1.200" fill="#2a50d0" />
          <path d="M9 4.500h4M9 7.500h4M9 10.500h4" stroke="#666" />
        </Ico>
      </RailIcon>
    </div>
  );
}

const mono = "[font-family:'Liberation_Mono',monospace]";

function NumInput({ w, value }: { w: string; value: string }) {
  return (
    <div className={`flex h-[24px] shrink-0 items-center overflow-hidden border border-[#b4b4b4] bg-white pr-[2px] pl-[3px] text-[15px] whitespace-pre text-[#222] ${mono} ${w}`}>
      <span className="block w-full overflow-hidden">{value}</span>
    </div>
  );
}

function SelectBox({ w, h = "h-[24px]", clip = "", value }: { w: string; h?: string; clip?: string; value: string }) {
  return (
    <div className={`flex shrink-0 items-center overflow-hidden border border-[#b4b4b4] bg-white pr-[8px] pl-[4px] text-[12px] text-[#222] ${w} ${h}`}>
      <span className={`overflow-hidden whitespace-nowrap ${clip}`}>{value}</span>
      <Tri className="ml-auto shrink-0 border-x-[4px] border-t-[5px]" />
    </div>
  );
}

function SectionHead({ label }: { label: string }) {
  return (
    <div className="flex h-[30px] items-center pr-[4px] pl-[7px]">
      <span className="text-[14px] text-[#3a93c8]">{label}</span>
      <span className="ml-auto">
        <ChevronDown up />
      </span>
    </div>
  );
}

function Collapsed({ label, h }: { label: string; h: string }) {
  return (
    <div className={`flex items-center border-b-2 border-[#d4d4d4] pt-[3px] pr-[4px] pl-[7px] ${h}`}>
      <span className="text-[14px] text-[#3a93c8]">{label}</span>
      <span className="ml-auto pb-[3px]">
        <ChevronDown />
      </span>
    </div>
  );
}

function DotsBtn({ children }: { children: ReactNode }) {
  return (
    <div className="flex h-[24px] w-[24px] shrink-0 items-center justify-center border border-[#b4b4b4] bg-white">
      <svg viewBox="0 0 22 22" className="h-[22px] w-[22px]">
        {children}
        <path d="M1 13c0 4 3 5 7 5" stroke="#e89030" strokeWidth="2" fill="none" />
        <path d="M6 14l4 4-4 3z" fill="#e89030" />
        <path d="M12 19h2M15 19h2M18 19h2" stroke="#111" strokeWidth="2" />
      </svg>
    </div>
  );
}

function Dialog() {
  const tab = "flex h-[28px] items-center justify-center border border-[#d2d2d2] text-[12px] text-[#222]";
  return (
    <div className="absolute top-[187px] left-[318px] flex h-[569px] w-[327px] flex-col bg-[#e6e6e6] shadow-[0_0_1px_#666]">
      <div className="flex h-[25px] shrink-0 items-center bg-[#5a8780] pr-[9px] pl-[7px] text-[13px] text-[#e8f0ee]">
        <svg viewBox="0 0 16 16" className="h-[14px] w-[14px]">
          <circle cx="8" cy="8" r="4.500" fill="none" stroke="#fff" strokeWidth="2.500" />
          <circle cx="8" cy="8" r="6.500" fill="none" stroke="#fff" strokeWidth="2" strokeDasharray="2.500 2.600" />
        </svg>
        <span className="ml-[10px]">非切削移动</span>
        <svg viewBox="0 0 12 12" className="ml-auto h-3 w-3">
          <path d="M1 1l10 10M11 1L1 11" stroke="#fff" strokeWidth="2" />
        </svg>
      </div>
      <div className="mt-[10px] flex pl-[11px]">
        <div className={`w-[102px] ${tab}`}>光顺</div>
        <div className={`w-[101px] ${tab}`}>避让</div>
        <div className={`w-[101px] ${tab}`}>更多</div>
      </div>
      <div className="relative z-10 flex h-[28px] pl-[11px]">
        <div className={`w-[96px] ${tab}`}>进刀</div>
        <div className={`w-[95px] ${tab}`}>退刀</div>
        <div className="-mt-px h-[31px] w-[114px] border-x border-t border-[#c8c8c8] bg-white px-[4px] pt-px pb-[2px]">
          <div className="flex h-full items-center justify-center border border-dotted border-[#333] text-[12px] text-[#3a93c8]">转移/快速</div>
        </div>
      </div>
      <div className="ml-[9px] flex h-[416px] w-[307px] flex-col border border-[#c8c8c8] bg-white px-[4px] text-[12px] text-[#222]">
        <div className="h-[66px] border-b-2 border-[#d4d4d4]">
          <SectionHead label="区域距离" />
          <div className="mt-[2px] flex items-center pl-[9px]">
            <span>区域距离</span>
            <div className="ml-auto flex gap-[2px] pr-[9px]">
              <NumInput w="w-[82px]" value="200.00000" />
              <SelectBox w="w-[63px]" clip="w-[38px]" value="刀具百分比" />
            </div>
          </div>
        </div>
        <div className="h-[67px] border-b-2 border-[#d4d4d4]">
          <SectionHead label="部件安全距离" />
          <div className="mt-[3px] flex items-center pl-[9px]">
            <span>部件安全距离</span>
            <div className="ml-auto flex gap-[2px] pr-[9px]">
              <NumInput w="w-[82px]" value="  3.00000" />
              <SelectBox w="w-[63px]" value="mm" />
            </div>
          </div>
        </div>
        <div className="h-[194px] border-b-2 border-[#d4d4d4]">
          <SectionHead label="公共安全设置" />
          <div className="mt-[3px] flex items-center pr-[9px] pl-[9px]">
            <span>安全设置选项</span>
            <SelectBox w="ml-auto w-[141px]" h="h-[25px]" value="圆柱" />
          </div>
          <div className="mt-[2px] flex h-[31px] items-center pr-[9px] pl-[11px]">
            <Check />
            <span className="ml-[6px]">指定点</span>
            <div className="ml-auto flex items-center gap-[2px]">
              <DotsBtn>
                <path d="M13 3v10M8 8h10" stroke="#111" strokeWidth="1.400" />
              </DotsBtn>
              <div className="flex h-[31px] w-[49px] items-center border border-[#b4b4b4] bg-white pr-[7px] pl-[3px]">
                <svg viewBox="0 0 28 28" className="h-7 w-7">
                  <path d="M3 14h9M16 14h9M14 3v9M14 16v9" stroke="#555" strokeWidth="1.200" />
                  <circle cx="14" cy="14" r="2" fill="#d83030" />
                </svg>
                <Tri className="ml-auto" />
              </div>
            </div>
          </div>
          <div className="mt-[3px] flex h-[32px] items-center pr-[9px] pl-[11px]">
            <Check />
            <span className="ml-[6px]">指定矢量</span>
            <div className="ml-auto flex items-center gap-[2px]">
              <div className="flex h-[24px] w-[24px] items-center justify-center border border-[#b4b4b4] bg-white">
                <svg viewBox="0 0 20 20" className="h-5 w-5">
                  <path d="M3 3l14 14" stroke="#111" strokeWidth="1.300" />
                  <path d="M16 4L4 16" stroke="#1a2ac8" strokeWidth="1.500" strokeDasharray="4 3" />
                  <path d="M18 2l-6 1 5 5zM2 18l6-1-5-5z" fill="#1a2ac8" />
                </svg>
              </div>
              <DotsBtn>
                <path d="M13 14V5" stroke="#c81818" strokeWidth="1.600" />
                <path d="M13 2l-3 5h6z" fill="#c81818" />
              </DotsBtn>
              <div className="flex h-[32px] w-[49px] items-center border border-[#b4b4b4] bg-white pr-[7px] pl-[3px]">
                <svg viewBox="0 0 28 28" className="h-7 w-7">
                  <path d="M8 24V6" stroke="#c81818" strokeWidth="1.800" />
                  <path d="M8 1l-3 7h6z" fill="#c81818" />
                  <path d="M14 14h8M18 14v4M13 18h10M15 21h6M17 24h2" stroke="#c020c0" strokeWidth="1.300" />
                </svg>
                <Tri className="ml-auto" />
              </div>
            </div>
          </div>
          <div className="mt-[2px] flex h-[23px] items-center pr-[9px] pl-[9px]">
            <span>半径</span>
            <div className="ml-auto">
              <NumInput w="h-[23px]! w-[82px]" value=" 20.00000" />
            </div>
          </div>
          <div className="mt-[2px] flex h-[32px] items-center pr-[9px] pl-[9px]">
            <span>显示</span>
            <div className="ml-auto flex h-[32px] w-[32px] items-center justify-center border border-[#b4b4b4] bg-white">
              <svg viewBox="0 0 26 26" className="h-[26px] w-[26px]">
                <path d="M2 5l3-3 12 9-7 7z" fill="#1f5fb8" />
                <path d="M2 5l3-3 12 9-4 1z" fill="#5f9be0" />
                <ellipse cx="17" cy="17" rx="6" ry="7.500" transform="rotate(-45 17 17)" fill="#f0e040" stroke="#1f4f98" strokeWidth="2" />
              </svg>
            </div>
          </div>
        </div>
        <Collapsed label="区域之间" h="h-[27px]" />
        <Collapsed label="区域内" h="h-[27px]" />
        <Collapsed label="初始和最终" h="h-[27px]" />
      </div>
      <div className="flex h-[18px] items-center justify-center">
        <span className="h-0 w-0 border-x-[5px] border-b-[5px] border-x-transparent border-b-[#222]" />
      </div>
      <div className="mx-[5px] border-t border-[#d0d0d0]" />
      <div className="mt-[8px] flex justify-end gap-[5px] pr-[16px] text-[12px] text-[#222]">
        <div className="flex h-[25px] w-[54px] items-center justify-center border border-[#3a93c8] bg-[#9ccbe6]">确定</div>
        <div className="flex h-[25px] w-[54px] items-center justify-center border border-[#bbbbbb] bg-[#c9cacc]">取消</div>
      </div>
    </div>
  );
}

const CX = 1091;
const CY = 546.5;

const holes = Array.from({ length: 12 }, (_, i) => {
  const a = (i * Math.PI) / 6;
  return { x: CX + 191 * Math.sin(a), y: CY - 192 * Math.cos(a) };
});

function Viewport() {
  return (
    <div className="relative min-w-0 flex-1 overflow-hidden bg-[#24262b]">
      <svg viewBox="390 187 1453 781" className="absolute inset-0 h-full w-full [font-family:'Noto_Sans','Noto_Sans_CJK_SC',sans-serif]">
        <circle cx={CX} cy={CY + 1} r="213" fill="#3b4a2f" />
        <circle cx={CX} cy={CY} r="212" fill="#658d45" stroke="#567a3b" strokeWidth="1.500" />
        <circle cx={CX} cy={CY} r="227" fill="none" stroke="#d3d56c" strokeWidth="2" strokeDasharray="9 8" />
        {holes.map((h, i) => (
          <circle key={i} cx={h.x} cy={h.y} r="11.800" fill="#24262b" />
        ))}
        <path d="M1091 546V450" stroke="#7f9cf2" strokeWidth="2" />
        <path d="M1091 442l-3.500 22h7z" fill="#7f9cf2" />
        <path d="M1091 496l-2.500 13 2.500 24 2.500-24z" fill="#7f9cf2" />
        <path d="M1091 546.500h106" stroke="#bfe6bd" strokeWidth="1.500" />
        <path d="M1198 546.500l-23-3v6z" fill="#a8dca8" />
        <path d="M1110 546.500l24-2 26 2-26 2z" fill="#a8dca8" />
        <circle cx={CX} cy={CY} r="4.500" fill="#b89a58" />
        <g fontSize="13">
          <text x="1096" y="441" fill="#2a55e8">ZM</text>
          <text x="1096" y="490" fill="#2a55e8">ZC</text>
          <text x="1135" y="542" fill="#2c8a30">YC</text>
          <text x="1181" y="542" fill="#2c8a30">YM</text>
          <text x="1092" y="547" fill="#d83030">XM</text>
        </g>

        <rect x="455" y="878" width="23" height="25" fill="#9a9a9a" />
        <path d="M453 903v-42" stroke="#2a40e0" strokeWidth="1.500" />
        <path d="M453 858l-3 10h6z" fill="#2a40e0" />
        <path d="M453 903h40" stroke="#2a9a30" strokeWidth="1.500" />
        <path d="M496 903l-10-3v6z" fill="#2a9a30" />
        <circle cx="453" cy="903" r="3" fill="#d84040" />
        <text x="450" y="860" fontSize="11" fill="#2a40e0">Z</text>
        <text x="497" y="908" fontSize="11" fill="#2a9a30">Y</text>

        <circle cx="1701" cy="545" r="33" fill="#777" stroke="#bdbdbd" strokeWidth="1" />
        <path d="M1701 515a30 30 0 0 1 10 2" stroke="#4de070" strokeWidth="5" fill="none" />
        <circle cx="1701" cy="545" r="27.500" fill="#ebebeb" stroke="#35d060" strokeWidth="1.200" />
        <text x="1689" y="546" fontSize="23" fill="#444">5</text>
        <text x="1702" y="546" fontSize="13" fill="#444">%</text>
        <path d="M1684 562v-7M1681.500 557.500l2.500-3.500 2.500 3.500" stroke="#2a90f0" strokeWidth="1.300" fill="none" />
        <text x="1694" y="562" fontSize="9.500" fill="#444">0K/s</text>

        <text x="1640" y="953" fontSize="43" fontWeight="700" fill="#85878a" letterSpacing="-.5">3D世界网</text>
        <text x="1642" y="973" fontSize="15" fontWeight="500" fill="#85878a" letterSpacing="4">WWW.3DSJW.COM</text>
      </svg>
    </div>
  );
}

function Overlay() {
  return (
    <svg viewBox="0 0 1843 998" className="pointer-events-none absolute inset-0 z-20 h-full w-full">
      <polygon points="811,315 913,366 916,364 926,378 908,377 911,372" fill="#f83a3a" />
      <polygon points="625,557 645,550 643,556 748,576 642,561 640,566" fill="#f83a3a" />
      <polygon points="1596,903 1632,923 1632,965 1627,968 1565,968 1560,965 1560,923" fill="#2a779e" />
      <polygon points="1560,923 1596,903 1625,919 1596,925 1576,932" fill="#708f9f" />
      <polygon points="1560,923 1576,932 1566,950 1570,968 1565,968 1560,965" fill="#3f7d9c" />
      <polygon points="1596,921 1617,933 1617,957 1596,969 1576,957 1576,933" fill="#24262b" />
      <polygon points="1596,926 1613,936 1596,946 1580,936" fill="#5b8aa5" />
      <polygon points="1580,939 1595,948 1595,964 1580,955" fill="#3d7896" />
      <polygon points="1613,939 1598,948 1598,964 1613,955" fill="#155f8d" />
      <polygon points="1565,968 1627,968 1596,985" fill="#7dd3ff" />
    </svg>
  );
}

export default function App() {
  return (
    <div className="relative flex h-[998px] w-[1843px] flex-col overflow-hidden bg-white [font-family:'Noto_Sans','Noto_Sans_CJK_SC',sans-serif]">
      <div className="flex h-[34px] shrink-0 items-center border-t border-[#aaaaaa] pl-[8px] text-[12px] text-[#111]">
        <span className="w-[37px] text-[22px] font-bold tracking-[-.5px] text-[#8a98a8]">NX</span>
        <VSep />
        <div className="flex pl-[10px]">
          <Sl w="w-[21px]">
            <Ico>
              <path d="M1 1h12l2 2v12H1z" fill="#bbb" stroke="#999" />
              <rect x="4" y="1" width="7" height="5" fill="#eee" />
              <rect x="4" y="9" width="8" height="6" fill="#888" />
            </Ico>
          </Sl>
        </div>
        <VSep />
        <div className="flex pl-[8px]">
          <Sl w="w-[22px]">
            <Ico>
              <path d="M3 3v5h5M3 8a6 6 0 0 1 10-1c1 2 0 5-2 7" stroke="#c0c0c0" strokeWidth="2" fill="none" />
            </Ico>
          </Sl>
          <Sl w="w-[16px]"><Tri /></Sl>
          <Sl w="w-[24px]">
            <Ico>
              <path d="M11 1L5 11M6 1l6 10" stroke="#c8c8c8" strokeWidth="1.400" />
              <circle cx="4" cy="13" r="2" fill="none" stroke="#c8c8c8" />
              <circle cx="12" cy="13" r="2" fill="none" stroke="#c8c8c8" />
            </Ico>
          </Sl>
          <Sl w="w-[22px]">
            <Ico>
              <path d="M2 1h7v10H2zM6 5h7l1 2v8H6z" fill="#eee" stroke="#c4c4c4" />
            </Ico>
          </Sl>
          <Sl w="w-[20px]">
            <Ico>
              <rect x="2" y="3" width="11" height="12" fill="#e4e4e4" stroke="#bbb" />
              <rect x="5" y="1" width="5" height="3" fill="#ddd" stroke="#bbb" />
              <path d="M6 8h9v7H6z" fill="#f2f2f2" stroke="#bbb" />
            </Ico>
          </Sl>
        </div>
        <VSep />
        <div className="flex pl-[5px]">
          <Sl w="w-[26px]">
            <Ico>
              <rect x="1" y="1" width="14" height="14" fill="#fff" stroke="#3a4aa0" />
              <rect x="1" y="1" width="14" height="3" fill="#5a80d0" />
              <path d="M4 6v7h7" stroke="#c82020" strokeWidth="1.200" fill="none" />
            </Ico>
          </Sl>
          <Sl w="w-[11px]"><Tri /></Sl>
        </div>
        <VSep />
        <div className="flex pl-[6px]">
          <Sl w="w-[23px]">
            <Ico>
              <path d="M1 9l4-3 3 5-4 2z" fill="#e0c080" stroke="#806020" strokeWidth=".5" />
              <path d="M6 6l7-4 2 3-7 5z" fill="#3040b0" />
            </Ico>
          </Sl>
        </div>
        <VSep />
        <div className="flex items-center pl-[9px]">
          <Ico>
            <rect x="2" y="1" width="12" height="13" fill="#fff" stroke="#3a4aa0" />
            <path d="M5 4l4-2 3 2v5l-3 2-4-2z" fill="#f4c840" stroke="#a07010" strokeWidth=".6" />
            <path d="M1 10v5h6" stroke="#888" fill="none" />
          </Ico>
          <span className="ml-px">窗口</span>
          <Tri className="ml-[4px]" />
          <span className="ml-[6px] flex flex-col items-center">
            <span className="mb-px h-px w-[6px] bg-[#222]" />
            <Tri />
          </span>
        </div>
        <span className="mt-px ml-[567px] whitespace-nowrap">NX 10 - 加工 - [4轴凸轮.prt （ 修改的 ） ]</span>
        <span className="ml-auto text-[12px] font-bold tracking-[.6px] text-[#0f9b9b]">SIEMENS</span>
        <div className="ml-[28px] flex items-center pr-[11px]">
          <span className="mt-[10px] h-[2px] w-[9px] bg-[#555]" />
          <span className="ml-[12px] h-[12px] w-[13px] border border-t-2 border-[#555]" />
          <svg viewBox="0 0 12 12" className="ml-[9px] h-3 w-3">
            <path d="M.5.5l11 11M11.500.5l-11 11" stroke="#555" strokeWidth="1.400" />
          </svg>
        </div>
      </div>

      <div className="mx-[4px] flex h-[28px] shrink-0 items-stretch bg-[#c8d8d6] text-[13px] text-[#222]">
        <div className="flex w-[81px] items-center justify-center bg-[#5a8780] text-[#e6efee]">文件(F)</div>
        <div className="ml-[2px] flex w-[52px] items-center justify-center border-t border-[#aaaaaa] bg-white text-[#2f8fc8]">主页</div>
        {["曲线", "分析", "视图", "渲染", "工具", "应用模块", "星空 V6.936F", "工具"].map((t, i) => (
          <div key={i} className="flex items-center px-[13px] whitespace-nowrap">
            {t}
          </div>
        ))}
        <div className="ml-auto flex items-center pr-[7px]">
          <div className="flex h-[20px] w-[126px] items-center border border-[#aaaaaa] bg-white pr-[2px] pl-px text-[11px] text-[#b8b8b8]">
            查找命令
            <svg viewBox="0 0 16 16" className="ml-auto h-4 w-4">
              <circle cx="10" cy="6" r="4.500" fill="#fff" stroke="#555" />
              <path d="M7 9l-5 5" stroke="#555" strokeWidth="2" />
            </svg>
          </div>
          <svg viewBox="0 0 16 16" className="ml-[10px] h-4 w-4">
            <path d="M1 4V1h3M12 1h3v3M15 12v3h-3M4 15H1v-3" stroke="#999" fill="none" />
            <rect x="3.500" y="3.500" width="9" height="9" fill="#e8eef8" stroke="#444" />
            <rect x="5" y="6" width="6" height="5" fill="#3f67c4" />
          </svg>
          <svg viewBox="0 0 14 10" className="ml-[11px] h-[10px] w-[14px]">
            <path d="M1 9l6-6 6 6M4 9l3-3 3 3" stroke="#222" fill="none" strokeWidth="1.300" />
          </svg>
          <span className="ml-[11px] flex h-[14px] w-[14px] items-center justify-center rounded-full bg-[#3a70d0] text-[11px] leading-none font-bold text-white">?</span>
          <svg viewBox="0 0 16 12" className="ml-[10px] h-3 w-4">
            <path d="M0 4l8-3 8 3-8 3z" fill="#222" />
            <path d="M4 6v3l4 2 3-2V6" fill="#333" />
            <path d="M14 4v6" stroke="#1a30d0" />
          </svg>
          <span className="ml-[4px] text-[11px]">教程</span>
          <span className="mt-[9px] ml-[8px] h-[2px] w-[9px] bg-[#333]" />
          <svg viewBox="0 0 12 12" className="ml-[11px] h-3 w-3">
            <path d="M3.500.5h8v7h-3M.5 3.500h8v8h-8z" stroke="#333" fill="none" />
            <path d="M.5 3.500h8" stroke="#333" strokeWidth="2" />
          </svg>
          <svg viewBox="0 0 12 12" className="ml-[10px] h-[14px] w-[14px]">
            <path d="M1 1l10 10M11 1L1 11" stroke="#b0b0b0" strokeWidth="1.600" />
          </svg>
        </div>
      </div>

      <Ribbon />
      <Toolbar />

      <div className="flex min-h-0 flex-1">
        <Rail />
        <NavPanel />
        <Viewport />
      </div>

      <div className="flex h-[23px] shrink-0 items-center border-t border-[#aaaaaa] pr-[58px] pl-[7px] text-[11px] font-medium text-[#222]">
        <span className="w-[871px]">指定非切削参数</span>
        <span className="font-bold">当前 : VARIABLE_CONTOUR</span>
        <span className="ml-auto flex h-[15px] w-[15px] items-center justify-center border border-dashed border-[#aaa]">
          <span className="h-[9px] w-[10px] border border-[#666] bg-[#7d9bd8]" />
        </span>
      </div>
      <div className="h-[8px] shrink-0 border-t border-[#aaaaaa] bg-[#5a8780]" />

      <Dialog />
      <Overlay />
    </div>
  );
}
